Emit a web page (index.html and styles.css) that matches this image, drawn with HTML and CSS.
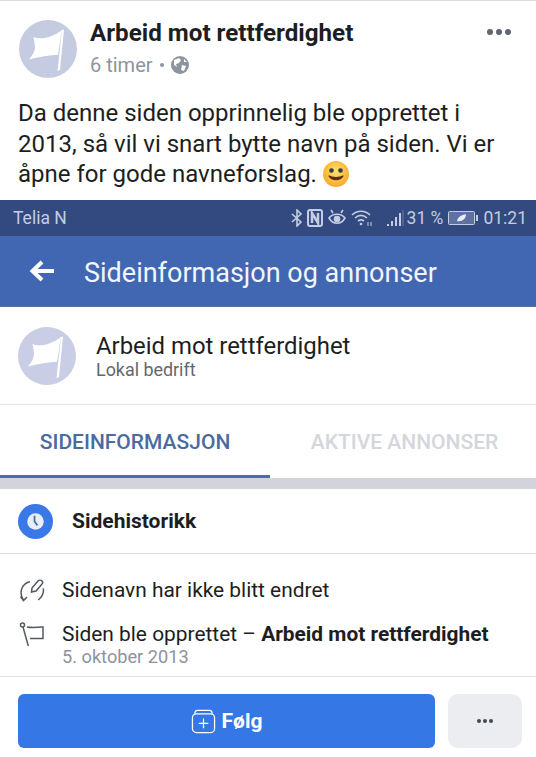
FILE: index.html

```html
<!DOCTYPE html>
<html lang="en">
<head>
  <meta charset="UTF-8" />
  <meta name="viewport" content="width=device-width, initial-scale=1.0" />
  <title>Arbeid mot rettferdighet</title>
  <link rel="stylesheet" href="styles.css">
</head>
<body>

<!-- Post header -->
<header class="post-head">
  <svg class="avatar" viewBox="0 0 58 58">
    <circle cx="29" cy="29" r="29" fill="#c5cce2"/>
    <path d="M14.500 17 C21 20 33 18 43 10 L39 35 C31 35 20 37 10 39.500 C13 36 15.500 32 16 28 C16 24 15 20 14.500 17 Z" fill="#fff"/>
    <path d="M43 10 L45 9.500 L41 50 L38.500 51 Z" fill="#fff"/>
  </svg>
  <div class="post-meta">
    <h1 class="post-title">Arbeid mot rettferdighet</h1>
    <div class="post-time">
      <span>6 timer</span>
      <span class="dot-sep"></span>
      <svg class="globe" viewBox="0 0 18 18">
        <circle cx="9" cy="9" r="9" fill="#8d949e"/>
        <path d="M3 4 L8 2 L10 4 L8 7 L5 8 L6 11 L3 9 Z M11 9 L15 10 L13 15 L10 14 Z M13 3 L16 6 L13 6 Z" fill="#fff"/>
      </svg>
    </div>
  </div>
  <div class="post-more"><i></i><i></i><i></i></div>
</header>

<p class="post-text">Da denne siden opprinnelig ble opprettet i 2013, så vil vi snart bytte navn på siden. Vi er åpne for gode navneforslag.
  <svg class="smiley" viewBox="0 0 26 26">
    <defs>
      <radialGradient id="face" cx="50%" cy="40%" r="60%">
        <stop offset="0" stop-color="#ffe36b"/>
        <stop offset="1" stop-color="#f7a928"/>
      </radialGradient>
    </defs>
    <circle cx="13" cy="13" r="13" fill="url(#face)"/>
    <circle cx="8.500" cy="9.500" r="2.300" fill="#35394f"/>
    <circle cx="17.500" cy="9.500" r="2.300" fill="#35394f"/>
    <path d="M6 15 C9 20 17 20 20 15 C17 17 9 17 6 15 Z" fill="#5a2a12" stroke="#5a2a12" stroke-width="1.200" stroke-linejoin="round"/>
  </svg>
</p>

<!-- The shared phone screenshot -->
<section class="shot">
  <div class="status">
    <span>Telia N</span>
    <div class="status-right">
      <svg class="st-icon" width="12" height="18" viewBox="0 0 12 18" fill="none" stroke="#c4cde2" stroke-width="1.600"><path d="M1 5 L10 13 L6 17 V1 L10 5 L1 13"/></svg>
      <svg class="st-icon" width="16" height="18" viewBox="0 0 16 18" fill="none" stroke="#c4cde2" stroke-width="2"><rect x="1" y="1" width="14" height="16" rx="2"/><path d="M5 14 V4 L11 14 V4" stroke-width="2.500"/></svg>
      <svg class="st-icon" width="20" height="18" viewBox="0 0 20 18" fill="none" stroke="#c4cde2" stroke-width="1.600"><path d="M2 9 C6 4 14 4 18 9 C14 16 6 16 2 9 Z"/><circle cx="10" cy="10" r="2.500" fill="#c4cde2"/><path d="M4 1 L6 4 M16 1 L14 4"/></svg>
      <svg class="st-icon" width="22" height="18" viewBox="0 0 22 18" fill="none" stroke="#c4cde2" stroke-width="1.600"><path d="M1 6 C6 1 14 1 19 6 M4 9 C8 5.500 12 5.500 16 9 M7 12 C9 10.500 11 10.500 13 12"/><circle cx="10" cy="15" r="1.300" fill="#c4cde2" stroke="none"/><path d="M17 13 V17 M20 13 V17" stroke-width="1"/></svg>
      <svg class="st-signal" width="18" height="18" viewBox="0 0 18 18"><path d="M1 15h2v2H1z M5 12h2v5H5z M9 8h2v9H9z M13 4h2v13h-2z" fill="#c4cde2"/><path d="M16.500 1h1v16h-1z" fill="#6d7ea8"/></svg>
      <span class="st-pct">31 %</span>
      <svg class="st-batt" width="31" height="14" viewBox="0 0 31 14"><rect x="0.500" y="0.500" width="26" height="13" rx="1" fill="#5d71a3" stroke="#c4cde2"/><path d="M9 10 C10 5 15 4 18 3 C18 8 14 11 9 10 Z" fill="#e9edf5"/><rect x="28" y="4" width="2" height="6" fill="#c4cde2"/></svg>
      <span>01:21</span>
    </div>
  </div>

  <div class="appbar">
    <svg class="back" viewBox="0 0 26 22" fill="none" stroke="#fff" stroke-width="4">
      <path d="M25 11 H4 M13 2 L3.500 11 L13 20"/>
    </svg>
    <span class="appbar-title">Sideinformasjon og annonser</span>
  </div>

  <div class="page-row">
    <svg class="avatar" viewBox="0 0 58 58">
      <circle cx="29" cy="29" r="29" fill="#c9cde6"/>
      <path d="M14.500 17 C21 20 33 18 43 10 L39 35 C31 35 20 37 10 39.500 C13 36 15.500 32 16 28 C16 24 15 20 14.500 17 Z" fill="#fff"/>
      <path d="M43 10 L45 9.500 L41 50 L38.500 51 Z" fill="#fff"/>
    </svg>
    <div>
      <div class="page-name">Arbeid mot rettferdighet</div>
      <div class="page-kind">Lokal bedrift</div>
    </div>
  </div>

  <div class="tabs">
    <div class="tab tab-active">SIDEINFORMASJON</div>
    <div class="tab tab-second">AKTIVE ANNONSER</div>
  </div>
  <div class="tab-gap"></div>

  <div class="history-head">
    <svg class="clock" viewBox="0 0 36 36">
      <circle cx="18" cy="18" r="18" fill="#3b78e7"/>
      <circle cx="18" cy="18" r="8.500" fill="#e8eef8"/>
      <path d="M17 12 V18 L20 22" fill="none" stroke="#4c6a9c" stroke-width="1.800"/>
    </svg>
    <span>Sidehistorikk</span>
  </div>

  <div class="history">
    <div class="hist-row">
      <svg class="hist-icon" viewBox="0 0 26 26" fill="none" stroke="#555962" stroke-width="1.500">
        <path d="M11 3.700 C4 5 -1 13 4.300 22 M24.300 10.300 C25 15 23 19 19.300 22"/>
        <path d="M1.500 18.500 L4.500 22.500 L8 19"/>
        <path d="M12.500 14 L13 10 L19 3 C20 2 22 2 23 3 C24 4 24 5 23 6 L17 13 Z"/>
      </svg>
      <div>Sidenavn har ikke blitt endret</div>
    </div>
    <div class="hist-row">
      <svg class="hist-icon" viewBox="0 0 26 26" fill="none" stroke="#555962" stroke-width="1.500">
        <circle cx="3.500" cy="3" r="2"/>
        <path d="M4 5 L9.300 24"/>
        <path d="M8 5 C13 6 18 5.500 24 5 V16.500 H11"/>
      </svg>
      <div>
        <div>Siden ble opprettet – <b>Arbeid mot rettferdighet</b></div>
        <div class="hist-date">5. oktober 2013</div>
      </div>
    </div>
  </div>

  <div class="actions">
    <div class="follow">
      <svg class="follow-icon" viewBox="0 0 26 26" fill="none" stroke="#fff" stroke-width="1.300">
        <path d="M4 5 C4 2.500 5 1.500 7 1.500 H19 C21 1.500 22 2.500 22 5"/>
        <rect x="1.500" y="5" width="23" height="19.500" rx="4"/>
        <path d="M13 10 V20 M8 15 H18"/>
      </svg>
      <span>Følg</span>
    </div>
    <div class="more-btn"><i></i><i></i><i></i></div>
  </div>
</section>

</body>
</html>
```

FILE: styles.css

```css
* {
  margin: 0;
  padding: 0;
  box-sizing: border-box;
}

html, body {
  height: 100%;
  overflow: hidden;
  background: #fff;
}

body {
  font-family: Roboto, 'Liberation Sans', sans-serif;
  color: #1c1e21;
  border-top: 1px solid #ddd;
}

.post-head {
  display: flex;
  padding: 19px 25px 0 19px;
  height: 97px;
}

.avatar {
  width: 58px;
  height: 58px;
  flex: none;
}

.post-meta {
  margin-left: 13px;
  flex: 1;
}

.post-title {
  font-size: 24.2px;
  font-weight: 700;
  line-height: 27px;
}

.post-time {
  display: flex;
  align-items: center;
  font-size: 20px;
  color: #8d949e;
  margin-top: 6px;
  line-height: 24px;
}

.dot-sep {
  width: 4px;
  height: 4px;
  border-radius: 50%;
  background: #8d949e;
  margin: 0 7px;
}

.globe {
  width: 18px;
  height: 18px;
}

.post-more {
  display: flex;
  gap: 3px;
  margin-top: 9px;
}

.post-more i {
  width: 6px;
  height: 6px;
  border-radius: 50%;
  background: #606770;
}

.post-text {
  font-size: 24px;
  line-height: 30.5px;
  padding: 0 18px;
  height: 102px;
}

.smiley {
  width: 26px;
  height: 26px;
  vertical-align: -5px;
}

.status {
  height: 36px;
  background: #324a80;
  color: #c4cde2;
  font-size: 17.5px;
  display: flex;
  align-items: center;
  justify-content: space-between;
  padding: 0 9px 0 13px;
}

.status-right {
  display: flex;
  align-items: center;
}

.st-icon {
  margin-right: 4px;
}

.st-signal {
  margin-left: 9px;
}

.st-pct {
  margin: 0 5px 0 3px;
}

.st-batt {
  margin-right: 4px;
}

.appbar {
  height: 71px;
  background: #4267b2;
  color: #f2f5fb;
  font-size: 27px;
  display: flex;
  align-items: center;
  padding-left: 29px;
  border-bottom: 1px solid #5d6f99;
}

.appbar-title {
  margin-top: 3px;
}

.back {
  width: 26px;
  height: 22px;
  margin-right: 29px;
}

.page-row {
  height: 98px;
  padding: 0 18px;
  display: flex;
  align-items: center;
  gap: 20px;
  border-bottom: 1px solid #e4e4e8;
}

.page-name {
  font-size: 23.9px;
  line-height: 28px;
  margin-top: 1px;
}

.page-kind {
  font-size: 17.9px;
  line-height: 20px;
  color: #65676e;
}

.tabs {
  display: flex;
  height: 73px;
}

.tab {
  flex: none;
  width: 270px;
  text-align: center;
  font-size: 21px;
  font-weight: 500;
  line-height: 74px;
  color: #d4d6db;
  white-space: nowrap;
}

.tab-second {
  width: 266px;
  padding-left: 3px;
}

.tab-active {
  color: #4b6a9f;
  border-bottom: 3px solid #4a6ea9;
}

.tab-gap {
  height: 11px;
  background: #d3d3dc;
}

.history-head {
  height: 65px;
  padding: 0 18px;
  display: flex;
  align-items: center;
  gap: 19px;
  font-size: 21px;
  font-weight: 700;
  border-bottom: 1px solid #dcdae0;
}

.clock {
  width: 35px;
  height: 35px;
}

.history {
  height: 122px;
  padding: 24px 18px 0 19px;
  font-size: 20.9px;
  line-height: 24px;
}

.hist-row {
  display: flex;
  gap: 17px;
  margin-bottom: 18px;
}

.hist-icon {
  width: 26px;
  height: 26px;
  flex: none;
}

.hist-row b {
  font-weight: 700;
}

.hist-date {
  font-size: 18.2px;
  line-height: 22px;
  color: #8d949e;
}

.actions {
  height: 81px;
  border-top: 1px solid #e0e0e4;
  padding: 17px 14px 0 18px;
  display: flex;
  gap: 13px;
}

.follow {
  flex: 1;
  height: 54px;
  background: #3578e5;
  color: #fff;
  border-radius: 6px;
  font-size: 21px;
  font-weight: 700;
  display: flex;
  align-items: center;
  justify-content: center;
  gap: 6px;
}

.follow-icon {
  width: 25px;
  height: 25px;
}

.more-btn {
  width: 74px;
  height: 54px;
  background: #ebedf0;
  border-radius: 10px;
  display: flex;
  align-items: center;
  justify-content: center;
  gap: 2px;
}

.more-btn i {
  width: 4px;
  height: 4px;
  border-radius: 50%;
  background: #444950;
}
```
